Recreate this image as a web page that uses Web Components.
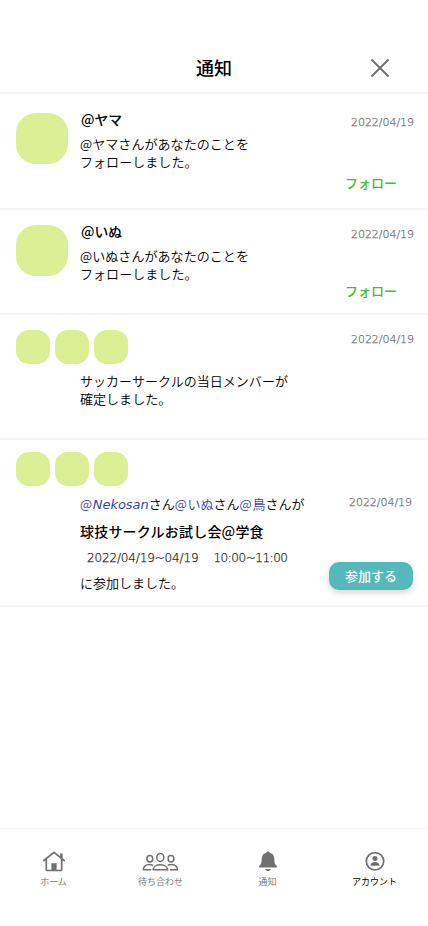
<!DOCTYPE html>
<html lang="ja">
<head>
<meta charset="utf-8">
<meta name="viewport" content="width=device-width">
<title>通知</title>
<style>
html,body{margin:0;background:#fff}
body{font-family:"DejaVu Sans","Noto Sans CJK JP",sans-serif;color:#000}
</style>
</head>
<body>
<notice-app></notice-app>
<script>
const define = (name, html) => {
  const t = document.createElement('template');
  t.innerHTML = html;
  customElements.define(name, class extends HTMLElement {
    constructor() { super(); this.attachShadow({mode: 'open'}).append(t.content.cloneNode(true)); }
  });
};

define('page-header', `<style>
:host{display:grid;grid-template-columns:1fr auto 1fr;align-items:center;padding-top:44px;box-sizing:border-box;border-bottom:2px solid #f3f3f3;height:94px}
h1{grid-column:2;margin:-1px 0 1px;font:500 18px/24px "Noto Sans CJK JP",sans-serif}
svg{justify-self:end;margin-right:38px}
</style><h1><slot></slot></h1>
<svg width="20" height="20" viewBox="0 0 20 20" fill="none" stroke="#707070" stroke-width="2" stroke-linecap="round"><path d="M2 2l16 16M18 2L2 18"/></svg>`);

define('user-avatar', `<style>
:host{display:block;box-sizing:border-box;width:34px;height:34px;border-radius:13px;background:#dcef94}
:host([large]){width:52px;height:51px;border-radius:20px}
</style>`);

define('date-label', `<style>
:host{display:block;font:200 11px/16px "DejaVu Sans",sans-serif;color:#707070;-webkit-text-stroke:.25px #707070;letter-spacing:-.04px;white-space:nowrap}
</style><slot></slot>`);

define('follow-notice', `<style>
:host{display:grid;grid-template-columns:52px 1fr auto;column-gap:12px;box-sizing:border-box;height:var(--h);padding:var(--top) 14px 0 16px;border-bottom:2px solid #f3f3f3}
.name{font:500 13.8px/18px "Noto Sans CJK JP",sans-serif;margin:-3px 0 0 1px}
.msg{font:350 13px/18px "Noto Sans CJK JP",sans-serif;margin-top:7px;white-space:nowrap;letter-spacing:.06px}
.side{display:flex;flex-direction:column;height:var(--side)}
date-label{margin-top:2px}
.follow{margin-top:auto;margin-left:-6px;font:500 13px/18px "Noto Sans CJK JP",sans-serif;color:#43bd34}
</style>
<user-avatar large></user-avatar>
<div><div class="name"><slot name="name"></slot></div><div class="msg"><slot></slot></div></div>
<div class="side"><date-label><slot name="date"></slot></date-label><div class="follow">フォロー</div></div>`);

define('group-notice', `<style>
:host{display:block;box-sizing:border-box;height:125px;padding:15px 14px 0 16px;border-bottom:2px solid #f3f3f3}
.top{display:flex;gap:5px}
date-label{margin-left:auto;margin-top:2px}
.msg{margin:8px 0 0 64px;font:350 13px/18px "Noto Sans CJK JP",sans-serif;letter-spacing:.04px}
</style><div class="top"><user-avatar></user-avatar><user-avatar></user-avatar><user-avatar></user-avatar><date-label><slot name="date"></slot></date-label></div><div class="msg"><slot></slot></div>`);

define('join-button', `<style>
:host{display:block}
button{display:block;width:84px;height:28px;border:0;border-radius:10px;padding:0;background:#55b8ba;color:#fff;font:500 13px/28px "Noto Sans CJK JP",sans-serif;box-shadow:0 3px 6px rgba(0,0,0,.16)}
</style><button><slot></slot></button>`);

define('event-notice', `<style>
:host{display:block;box-sizing:border-box;height:167px;padding:12px 15px 0 16px;border-bottom:2px solid #f3f3f3}
.top{display:flex;gap:5px}
.body{display:grid;grid-template-columns:1fr auto;padding-left:64px;margin-top:9px}
.who,.done{font:350 13px/18px "Noto Sans CJK JP",sans-serif;white-space:nowrap}
.title{margin-top:7px;font:500 14px/20px "Noto Sans CJK JP",sans-serif;letter-spacing:.2px}
.when{display:flex;gap:15px;margin:9px 0 0 7px;font:200 12px/16px "DejaVu Sans",sans-serif;letter-spacing:-.15px;color:#222;-webkit-text-stroke:.25px #222}
slot[name=hours]::slotted(*){letter-spacing:-.47px}
.done{margin-top:8px}
.side{display:flex;flex-direction:column;align-items:flex-end}
date-label{margin:0 1px 0 0}
join-button{margin-top:51px}
</style><div class="top"><user-avatar></user-avatar><user-avatar></user-avatar><user-avatar></user-avatar></div>
<div class="body"><div><div class="who"><slot name="who"></slot></div><div class="title"><slot name="title"></slot></div><div class="when"><slot name="days"></slot><slot name="hours"></slot></div><div class="done"><slot></slot></div></div>
<div class="side"><date-label><slot name="date"></slot></date-label><join-button>参加する</join-button></div></div>`);

define('user-mention', `<style>:host{color:#3344a8}:host([latin]){font-family:"DejaVu Sans",sans-serif;font-size:13px;font-style:oblique;letter-spacing:-.05px}span{font-family:"Noto Sans CJK JP",sans-serif;font-style:normal;font-size:13px;letter-spacing:.7px}</style><span>@</span><slot></slot>`);

define('nav-item', `<style>
:host{display:flex;flex-direction:column;align-items:center;flex:1;color:#707070;font:350 9px/13px "Noto Sans CJK JP",sans-serif}
:host([active]){color:#000;font-weight:400}
.icon{display:flex;height:24px;align-items:center;margin-bottom:2px}
</style><div class="icon"><slot name="icon"></slot></div><slot></slot>`);

define('tab-bar', `<style>
:host{display:flex;box-sizing:border-box;height:98px;border-top:1px solid #f3f3f3;padding-top:20px}
svg{display:block}
</style>
<nav-item><svg slot="icon" width="24" height="22" viewBox="0 0 24 22" fill="none" stroke="#707070" stroke-width="1.7" stroke-linecap="round" stroke-linejoin="round"><path d="M1.8 10.5L12 2.400l10.200 8.100M4.300 9.200v10.300q0 1 1 1h13.400q1 0 1-1V9.200"/><path d="M19.400 3.500v4.800" stroke-width="2.500" stroke-linecap="butt"/><path d="M9.400 13.200h5.200v7.300H9.400z" fill="#707070" stroke="none"/></svg>ホーム</nav-item>
<nav-item><svg slot="icon" width="38" height="20" viewBox="0 0 38 20" fill="none" stroke="#707070" stroke-width="1.500" stroke-linecap="round" stroke-linejoin="round"><ellipse cx="18.300" cy="6.500" rx="3.500" ry="4"/><ellipse cx="7.800" cy="7.700" rx="2.900" ry="3.200"/><ellipse cx="29" cy="7.700" rx="2.900" ry="3.200"/><path d="M11.100 18.800c.2-3.300 3.600-5.100 7.200-5.100s7.200 1.800 7.400 5.100zM8.600 18.800H1.300c0-3 2.200-5.300 6-5.300 1.300 0 2.300.2 3.200.6M28.500 18.800h7c0-3-2.200-5.300-6-5.300-1.300 0-2.300.2-3.200.6"/></svg>待ち合わせ</nav-item>
<nav-item><svg slot="icon" width="18" height="20" viewBox="0 0 18 20" fill="#707070"><path transform="translate(0 .4)" d="M9 0c.9 0 1.400.5 1.600 1.200 3 .9 4.600 3.300 4.700 6.300.1 4 .6 5.100 1.700 6.100.8.7 1 1.200 1 1.700 0 .4-.3.700-.8.700H.8c-.5 0-.8-.3-.8-.7 0-.5.2-1 1-1.700 1.100-1 1.600-2.100 1.700-6.100.1-3 1.700-5.400 4.700-6.300C7.600.5 8.100 0 9 0zM6.200 17.500h5.600c-.5 1.400-1.500 2.100-2.800 2.100s-2.300-.7-2.800-2.100z"/></svg>通知</nav-item>
<nav-item active><svg slot="icon" width="20" height="20" viewBox="0 0 20 20" fill="#707070"><g transform="translate(0 .3)"><circle cx="10" cy="10" r="8.700" fill="none" stroke="#707070" stroke-width="1.700"/><circle cx="10" cy="7.100" r="2.500"/><path d="M5.500 14.500c0-2.500 2-3.700 4.500-3.700s4.500 1.200 4.500 3.700z"/></g></svg>アカウント</nav-item>`);

define('notice-app', `<style>
:host{display:flex;flex-direction:column;width:428px;height:926px;background:#fff;overflow:hidden}
main{flex:1}
</style>
<page-header>通知</page-header>
<main>
<follow-notice style="--h:116px;--top:19px;--side:79px"><span slot="name">@ヤマ</span><span slot="date">2022/04/19</span>@ヤマさんがあなたのことを<br>フォローしました。</follow-notice>
<follow-notice style="--h:105px;--top:15px;--side:75px"><span slot="name">@いぬ</span><span slot="date">2022/04/19</span>@いぬさんがあなたのことを<br>フォローしました。</follow-notice>
<group-notice><span slot="date">2022/04/19</span>サッカーサークルの当日メンバーが<br>確定しました。</group-notice>
<event-notice><span slot="who"><user-mention latin>Nekosan</user-mention>さん<user-mention>いぬ</user-mention>さん<user-mention>鳥</user-mention>さんが</span><span slot="title">球技サークルお試し会@学食</span><span slot="days">2022/04/19~04/19</span><span slot="hours">10:00~11:00</span><span slot="date">2022/04/19</span>に参加しました。</event-notice>
</main>
<tab-bar></tab-bar>`);
</script>
</body>
</html>
